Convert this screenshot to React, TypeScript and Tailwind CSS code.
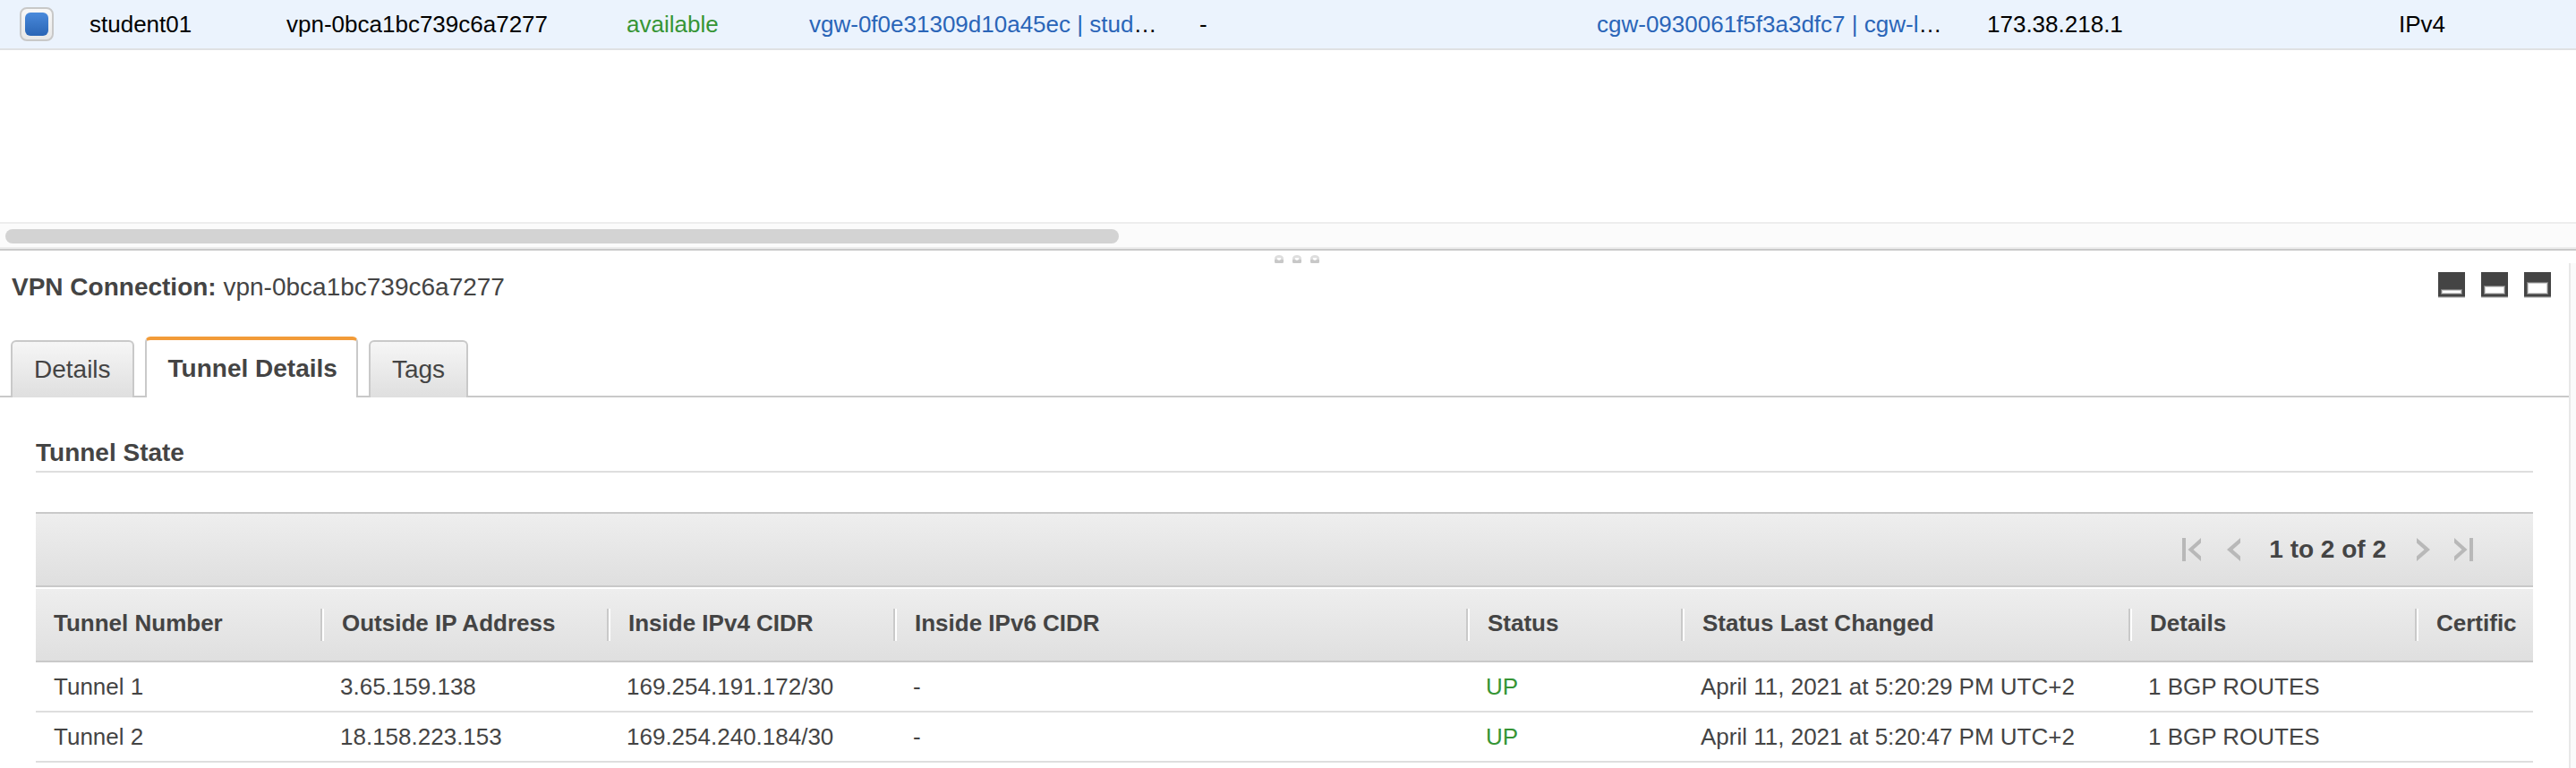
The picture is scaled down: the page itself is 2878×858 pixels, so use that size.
import type { ReactNode } from "react";

const tunnels = [
  {
    name: "Tunnel 1",
    outside: "3.65.159.138",
    inside4: "169.254.191.172/30",
    inside6: "-",
    status: "UP",
    changed: "April 11, 2021 at 5:20:29 PM UTC+2",
    details: "1 BGP ROUTES",
  },
  {
    name: "Tunnel 2",
    outside: "18.158.223.153",
    inside4: "169.254.240.184/30",
    inside6: "-",
    status: "UP",
    changed: "April 11, 2021 at 5:20:47 PM UTC+2",
    details: "1 BGP ROUTES",
  },
];

const headers = [
  "Tunnel Number",
  "Outside IP Address",
  "Inside IPv4 CIDR",
  "Inside IPv6 CIDR",
  "Status",
  "Status Last Changed",
  "Details",
  "Certific",
];

function ConnectionList() {
  return (
    <section className="h-[248px] overflow-hidden">
      <table className="w-full table-fixed border-separate border-spacing-0 text-[26px] leading-8 text-black">
        <colgroup>
          <col className="w-[76px]" />
          <col className="w-[220px]" />
          <col className="w-[380px]" />
          <col className="w-[204px]" />
          <col className="w-[436px]" />
          <col className="w-[444px]" />
          <col className="w-[436px]" />
          <col className="w-[460px]" />
          <col />
        </colgroup>
        <tbody>
          <tr className="h-14 bg-[#ebf3fd] [&>td]:border-b-2 [&>td]:border-[#dfe1e3]">
            <td className="pl-[22px]">
              <input
                type="checkbox"
                defaultChecked
                aria-label="Select student01"
                className="block size-[38px] appearance-none rounded-lg border-2 border-[#c8c8c8] bg-[#f2f2f2] bg-linear-to-b from-[#f8f8f8] to-[#e8e8e8] p-1 before:block before:size-full before:rounded-md before:bg-linear-to-b before:from-[#4a8adb] before:to-[#2a65b5] before:opacity-0 checked:before:opacity-100"
              />
            </td>
            <td className="truncate px-6">student01</td>
            <td className="truncate px-6">vpn-0bca1bc739c6a7277</td>
            <td className="truncate px-6 text-[#369535]">available</td>
            <td className="pl-6 whitespace-nowrap">
              <a href="#vgw" className="text-[#2a65b8]">
                vgw-0f0e31309d10a45ec | stud
              </a>
              …
            </td>
            <td className="truncate px-6">-</td>
            <td className="pl-6 whitespace-nowrap">
              <a href="#cgw" className="text-[#2a65b8]">
                cgw-0930061f5f3a3dfc7 | cgw-l
              </a>
              …
            </td>
            <td className="truncate px-6">173.38.218.1</td>
            <td className="truncate px-6">IPv4</td>
          </tr>
        </tbody>
      </table>
    </section>
  );
}

function HorizontalScrollbar() {
  return (
    <div className="h-[30px] border-y-2 border-[#ededed] bg-[#fbfbfb] px-1.5 py-1.5">
      <div className="h-4 w-[1244px] rounded-full bg-[#d3d3d3]" />
    </div>
  );
}

function Splitter() {
  return (
    <div className="flex h-4 items-start justify-center gap-2.5 border-t-2 border-[#c9c9c9] pt-[5px] pl-5">
      {[0, 1, 2].map((dot) => (
        <svg key={dot} viewBox="0 0 10 9" className="h-[9px] w-2.5" aria-hidden="true">
          <path d="M0 8V3Q1 0 5 0T10 3V8L9 9H1Z" fill="#dedede" />
          <path d="M0 5H10V8L9 9H1L0 8Z" fill="#c8c8c8" />
          <path d="M3 3H7V5L5 6L3 5Z" fill="#fff" />
        </svg>
      ))}
    </div>
  );
}

function PanelSizeButton({ label, top }: { label: string; top: number }) {
  return (
    <button type="button" aria-label={label} className="block">
      <svg viewBox="0 0 30 29" className="h-[29px] w-[30px]" aria-hidden="true">
        <rect width="30" height="27" fill="#444" />
        <rect y="27" width="30" height="1" fill="#808080" />
        <rect y="28" width="30" height="1" fill="#d0d0d0" />
        <rect x="3" y={top} width="24" height={25 - top} fill="#777" />
        <rect x="4" y={top + 1} width="22" height={23 - top} fill="#ccc" />
        <rect x="5" y={top + 2} width="20" height={21 - top} fill="#fff" />
      </svg>
    </button>
  );
}

function Tab({ active, children }: { active?: boolean; children: ReactNode }) {
  return (
    <button
      type="button"
      role="tab"
      aria-selected={!!active}
      className={
        active
          ? "h-[68px] rounded-t-md border-x-2 border-t-4 border-x-[#c9c9c9] border-t-[#f29b38] bg-white pr-[21px] pl-6 font-bold"
          : "h-16 rounded-t-md border-2 border-b-0 border-[#c9c9c9] bg-linear-to-b from-[#f6f6f6] to-[#dfdfdf] px-6"
      }
    >
      {children}
    </button>
  );
}

function PagerButton({ label, d, wide }: { label: string; d: string; wide?: boolean }) {
  return (
    <button type="button" aria-label={label} className="block">
      <svg
        viewBox={wide ? "0 0 21 26" : "0 0 15 26"}
        className={wide ? "h-[26px] w-[21px]" : "h-[26px] w-[15px]"}
        aria-hidden="true"
      >
        <path d={d} fill="#b8b8b8" />
      </svg>
    </button>
  );
}

function TunnelTable() {
  return (
    <table className="w-full table-fixed border-separate border-spacing-0 text-left text-[26px] leading-8">
      <colgroup>
        <col className="w-80" />
        <col className="w-80" />
        <col className="w-80" />
        <col className="w-[640px]" />
        <col className="w-60" />
        <col className="w-[500px]" />
        <col className="w-80" />
        <col />
      </colgroup>
      <thead>
        <tr className="h-[82px] bg-linear-to-b from-[#eee] to-[#dfdfdf]">
          {headers.map((header, i) => (
            <th key={header} className="border-b-2 border-[#c9c9c9] p-0 font-bold">
              <div
                className={
                  i === 0
                    ? "h-9 border-r-2 border-[#c9c9c9] pl-5"
                    : i === headers.length - 1
                      ? "h-9 border-l-2 border-white pl-5"
                      : "h-9 border-r-2 border-l-2 border-r-[#c9c9c9] border-l-white pl-5"
                }
              >
                <div className="whitespace-nowrap">{header}</div>
              </div>
            </th>
          ))}
        </tr>
      </thead>
      <tbody>
        {tunnels.map((t) => (
          <tr key={t.name} className="h-14 [&>td]:border-b-2 [&>td]:border-[#dedede]">
            <td className="truncate pl-5">{t.name}</td>
            <td className="truncate pl-5">{t.outside}</td>
            <td className="truncate pl-5">{t.inside4}</td>
            <td className="truncate pl-5">{t.inside6}</td>
            <td className="truncate pl-5 text-[#369535]">{t.status}</td>
            <td className="truncate pl-5">{t.changed}</td>
            <td className="truncate pl-5">{t.details}</td>
            <td />
          </tr>
        ))}
      </tbody>
    </table>
  );
}

export default function App() {
  return (
    <div className="flex min-h-screen flex-col bg-white font-['Liberation_Sans',Arial,sans-serif] text-[#444]">
      <ConnectionList />
      <HorizontalScrollbar />
      <Splitter />
      <div className="flex grow">
        <main className="min-w-0 grow text-[28px] leading-8">
          <header className="flex items-start justify-between pr-5 pl-[13px]">
            <h1 className="pt-[11px]">
              <strong>VPN Connection:</strong> vpn-0bca1bc739c6a7277
            </h1>
            <div className="flex gap-[18px] pt-2.5">
              <PanelSizeButton label="Minimize panel" top={19} />
              <PanelSizeButton label="Split panel" top={15} />
              <PanelSizeButton label="Maximize panel" top={11} />
            </div>
          </header>
          <div className="mt-[39px] border-b-2 border-[#c9c9c9] px-3">
            <div role="tablist" className="-mb-0.5 flex items-end gap-3">
              <Tab>Details</Tab>
              <Tab active>Tunnel Details</Tab>
              <Tab>Tags</Tab>
            </div>
          </div>
          <section className="px-10 pt-[46px]">
            <h2 className="h-[38px] border-b-2 border-[#dedede] font-bold">Tunnel State</h2>
            <div className="mt-11 flex h-[84px] items-center justify-end border-y-2 border-[#c9c9c9] bg-linear-to-b from-[#eee] to-[#dfdfdf] pr-[67px]">
              <PagerButton wide label="First page" d="M0 0H4V26H0ZM21 0V5.5L12.5 13L21 20.5V26L6.5 13Z" />
              <div className="w-[29px]" />
              <PagerButton label="Previous page" d="M15 0V5.5L6.5 13L15 20.5V26L0 13Z" />
              <span className="pr-[34px] pl-8 font-bold">1 to 2 of 2</span>
              <PagerButton label="Next page" d="M0 0V5.5L8.5 13L0 20.5V26L15 13Z" />
              <div className="w-[27px]" />
              <PagerButton wide label="Last page" d="M17 0H21V26H17ZM0 0V5.5L8.5 13L0 20.5V26L14.5 13Z" />
            </div>
            <div className="mt-0.5">
              <TunnelTable />
            </div>
          </section>
        </main>
        <div className="w-2 shrink-0 border-l-2 border-[#e8e8e8] bg-[#fafafa]" />
      </div>
    </div>
  );
}
